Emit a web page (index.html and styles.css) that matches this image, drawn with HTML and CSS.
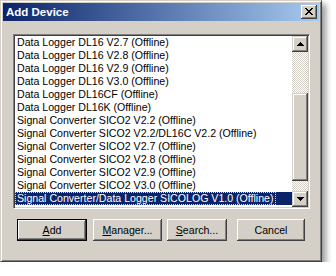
FILE: index.html
```html
<!DOCTYPE html>
<html>
<head>
<meta charset="utf-8">
<link rel="stylesheet" href="styles.css">
</head>
<body>
<div class="dialog">
  <div class="titlebar">
    <span class="title">Add Device</span>
    <span class="close">
      <svg width="16" height="14" viewBox="0 0 16 14"><path d="M4 3h2v1h1v1h2v-1h1v-1h2v1h-1v1h-1v1h-1v1h1v1h1v1h1v1h-2v-1h-1v-1h-2v1h-1v1h-2v-1h1v-1h1v-1h1v-1h-1v-1h-1v-1h-1z" fill="#000"/></svg>
    </span>
  </div>
  <div class="client">
    <div class="listbox">
      <div class="items">
        <div class="item">Data Logger DL16 V2.7 (Offline)</div>
        <div class="item">Data Logger DL16 V2.8 (Offline)</div>
        <div class="item">Data Logger DL16 V2.9 (Offline)</div>
        <div class="item">Data Logger DL16 V3.0 (Offline)</div>
        <div class="item">Data Logger DL16CF (Offline)</div>
        <div class="item">Data Logger DL16K (Offline)</div>
        <div class="item">Signal Converter SICO2 V2.2 (Offline)</div>
        <div class="item">Signal Converter SICO2 V2.2/DL16C V2.2 (Offline)</div>
        <div class="item">Signal Converter SICO2 V2.7 (Offline)</div>
        <div class="item">Signal Converter SICO2 V2.8 (Offline)</div>
        <div class="item">Signal Converter SICO2 V2.9 (Offline)</div>
        <div class="item">Signal Converter SICO2 V3.0 (Offline)</div>
        <div class="item selected"><span class="focus">Signal Converter/Data Logger SICOLOG V1.0 (Offline)</span></div>
      </div>
      <div class="scrollbar">
        <div class="sbtn"><svg width="7" height="4" viewBox="0 0 7 4"><path d="M3 0h1v1h1v1h1v1h1v1h-7v-1h1v-1h1v-1h1z" fill="#000"/></svg></div>
        <div class="track"><div class="thumb"></div></div>
        <div class="sbtn"><svg width="7" height="4" viewBox="0 0 7 4"><path d="M0 0h7v1h-1v1h-1v1h-1v1h-1v-1h-1v-1h-1v-1h-1z" fill="#000"/></svg></div>
      </div>
    </div>
    <div class="buttons">
      <div class="btn default w-add"><span class="face"><u>A</u>dd</span></div>
      <div class="btn w-manager"><span class="face"><u>M</u>anager...</span></div>
      <div class="btn w-search"><span class="face"><u>S</u>earch...</span></div>
      <div class="btn w-cancel"><span class="face">Cancel</span></div>
    </div>
  </div>
</div>
</body>
</html>
```
FILE: styles.css
```css
html, body {
  margin: 0;
  padding: 0;
  background: #ffffff;
}
body {
  font-family: "Liberation Sans", Arial, sans-serif;
  font-size: 10.6px;
  color: #000;
}
.dialog {
  width: 322px;
  height: 262px;
  box-sizing: border-box;
  background: #d4d0c8;
  border: 1px solid;
  border-color: #d4d0c8 #404040 #404040 #d4d0c8;
  box-shadow: inset 1px 1px #ffffff, inset -1px -1px #808080, 4px 4px 6px rgba(0,0,0,0.4);
  padding: 2px;
  display: flex;
  flex-direction: column;
}
.titlebar {
  height: 18px;
  background: linear-gradient(to right, #0a246a, #a6caf0);
  display: flex;
  align-items: center;
  justify-content: space-between;
  padding: 0 2px 0 3px;
}
.title {
  color: #fff;
  font-weight: bold;
  font-size: 11.5px;
  line-height: 18px;
}
.close {
  width: 16px;
  height: 14px;
  box-sizing: border-box;
  background: #d4d0c8;
  box-shadow: inset -1px -1px #404040, inset 1px 1px #ffffff, inset -2px -2px #808080;
  display: flex;
}
.client {
  flex: 1;
  padding: 13px 0 0 10px;
  display: flex;
  flex-direction: column;
}
.listbox {
  width: 297px;
  height: 175px;
  box-sizing: border-box;
  border: 1px solid;
  border-color: #808080 #ffffff #ffffff #808080;
  box-shadow: inset 1px 1px #404040, inset -1px -1px #d4d0c8;
  padding: 1px;
  background: #fff;
  display: flex;
}
.items {
  flex: 1;
  overflow: hidden;
}
.item {
  height: 13px;
  line-height: 13px;
  padding-left: 2px;
  white-space: nowrap;
}
.item.selected {
  background: #0a246a;
  color: #fff;
  padding-left: 0;
}
.focus {
  display: inline-block;
  vertical-align: top;
  height: 13px;
  box-sizing: border-box;
  border: 1px dotted #e8d890;
  line-height: 11px;
  padding: 0 1px;
}
.scrollbar {
  width: 16px;
  display: flex;
  flex-direction: column;
}
.sbtn {
  height: 16px;
  box-sizing: border-box;
  background: #d4d0c8;
  box-shadow: inset -1px -1px #404040, inset 1px 1px #d4d0c8, inset -2px -2px #808080, inset 2px 2px #ffffff;
  display: flex;
  align-items: center;
  justify-content: center;
}
.track {
  flex: 1;
  background: repeating-conic-gradient(#ffffff 0 25%, #d4d0c8 0 50%) 0 0 / 2px 2px;
}
.thumb {
  margin-top: 41px;
  height: 88px;
  background: #d4d0c8;
  box-shadow: inset -1px -1px #404040, inset 1px 1px #d4d0c8, inset -2px -2px #808080, inset 2px 2px #ffffff;
}
.buttons {
  display: flex;
  margin-top: 10px;
  padding-left: 4px;
}
.btn {
  height: 22px;
  box-sizing: border-box;
  display: flex;
}
.face {
  flex: 1;
  display: flex;
  align-items: center;
  justify-content: center;
  background: #d4d0c8;
  box-shadow: inset -1px -1px #404040, inset 1px 1px #ffffff, inset -2px -2px #808080;
}
.btn.default {
  border: 1px solid #000;
}
.w-add { width: 70px; }
.w-manager { width: 69px; margin-left: 6px; }
.w-search { width: 60px; margin-left: 5px; }
.w-cancel { width: 68px; margin-left: 10px; }
u { text-decoration: underline; text-underline-offset: 1px; }
```
